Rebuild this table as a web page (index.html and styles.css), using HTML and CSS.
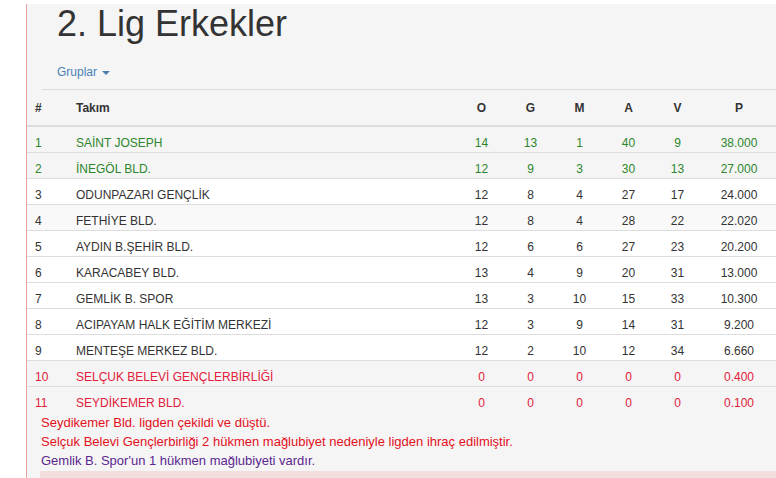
FILE: index.html
```html
<!DOCTYPE html>
<html lang="tr">
<head>
    <meta charset="UTF-8">
    <meta name="viewport" content="width=device-width, initial-scale=1.0">
    <title>2. Lig Erkekler</title>
    <link rel="stylesheet" href="styles.css">
</head>
<body>
    <div class="page">
        <h1 class="title">2. Lig Erkekler</h1>

        <div class="groups">
            <a href="#" class="groups-toggle">Gruplar <span class="caret"></span></a>
        </div>

        <table class="standings">
            <colgroup>
                <col class="col-rank">
                <col class="col-team">
                <col class="col-num">
                <col class="col-num">
                <col class="col-num">
                <col class="col-num">
                <col class="col-num">
                <col class="col-pts">
            </colgroup>
            <thead>
                <tr>
                    <th>#</th>
                    <th>Takım</th>
                    <th class="num">O</th>
                    <th class="num">G</th>
                    <th class="num">M</th>
                    <th class="num">A</th>
                    <th class="num">V</th>
                    <th class="num">P</th>
                </tr>
            </thead>
            <tbody>
                <tr class="up">
                    <td>1</td><td>SAİNT JOSEPH</td>
                    <td class="num">14</td><td class="num">13</td><td class="num">1</td><td class="num">40</td><td class="num">9</td><td class="num">38.000</td>
                </tr>
                <tr class="up">
                    <td>2</td><td>İNEGÖL BLD.</td>
                    <td class="num">12</td><td class="num">9</td><td class="num">3</td><td class="num">30</td><td class="num">13</td><td class="num">27.000</td>
                </tr>
                <tr class="plain">
                    <td>3</td><td>ODUNPAZARI GENÇLİK</td>
                    <td class="num">12</td><td class="num">8</td><td class="num">4</td><td class="num">27</td><td class="num">17</td><td class="num">24.000</td>
                </tr>
                <tr class="plain alt">
                    <td>4</td><td>FETHİYE BLD.</td>
                    <td class="num">12</td><td class="num">8</td><td class="num">4</td><td class="num">28</td><td class="num">22</td><td class="num">22.020</td>
                </tr>
                <tr class="plain">
                    <td>5</td><td>AYDIN B.ŞEHİR BLD.</td>
                    <td class="num">12</td><td class="num">6</td><td class="num">6</td><td class="num">27</td><td class="num">23</td><td class="num">20.200</td>
                </tr>
                <tr class="plain">
                    <td>6</td><td>KARACABEY BLD.</td>
                    <td class="num">13</td><td class="num">4</td><td class="num">9</td><td class="num">20</td><td class="num">31</td><td class="num">13.000</td>
                </tr>
                <tr class="plain">
                    <td>7</td><td>GEMLİK B. SPOR</td>
                    <td class="num">13</td><td class="num">3</td><td class="num">10</td><td class="num">15</td><td class="num">33</td><td class="num">10.300</td>
                </tr>
                <tr class="plain">
                    <td>8</td><td>ACIPAYAM HALK EĞİTİM MERKEZİ</td>
                    <td class="num">12</td><td class="num">3</td><td class="num">9</td><td class="num">14</td><td class="num">31</td><td class="num">9.200</td>
                </tr>
                <tr class="plain">
                    <td>9</td><td>MENTEŞE MERKEZ BLD.</td>
                    <td class="num">12</td><td class="num">2</td><td class="num">10</td><td class="num">12</td><td class="num">34</td><td class="num">6.660</td>
                </tr>
                <tr class="down">
                    <td>10</td><td>SELÇUK BELEVİ GENÇLERBİRLİĞİ</td>
                    <td class="num">0</td><td class="num">0</td><td class="num">0</td><td class="num">0</td><td class="num">0</td><td class="num">0.400</td>
                </tr>
                <tr class="down">
                    <td>11</td><td>SEYDİKEMER BLD.</td>
                    <td class="num">0</td><td class="num">0</td><td class="num">0</td><td class="num">0</td><td class="num">0</td><td class="num">0.100</td>
                </tr>
            </tbody>
        </table>

        <div class="notes">
            <p class="note-red">Seydikemer Bld. ligden çekildi ve düştü.</p>
            <p class="note-red">Selçuk Belevi Gençlerbirliği 2 hükmen mağlubiyet nedeniyle ligden ihraç edilmiştir.</p>
            <p class="note-purple">Gemlik B. Spor'un 1 hükmen mağlubiyeti vardır.</p>
        </div>

        <div class="alert"></div>
    </div>
</body>
</html>
```

FILE: styles.css
```css
body {
    margin: 0;
    padding: 0;
    background-color: #ffffff;
    font-family: 'Liberation Sans', Arial, sans-serif;
    color: #333333;
    overflow: hidden;
}

.page {
    margin-left: 26px;
    border-left: 1px solid #e6a3a3; /* pinkish rule */
    background-color: #f5f5f5;
    min-height: 478px;
}

.title {
    margin: 4px 0 0 30px;
    font-size: 36px;
    font-weight: 400;
    line-height: 40px;
    color: #333333;
}

.groups {
    margin: 19px 0 0 15px;
    padding: 0 0 9px 15px;
    border-bottom: 1px solid #dddddd;
    line-height: 16px;
}

.groups-toggle {
    font-size: 12px;
    color: #4a7fb5;
    text-decoration: none;
}

.caret {
    display: inline-block;
    width: 0;
    height: 0;
    margin-left: 2px;
    vertical-align: middle;
    border-top: 4px solid #4a7fb5;
    border-left: 4px solid transparent;
    border-right: 4px solid transparent;
}

.standings {
    width: 749px;
    table-layout: fixed;
    border-collapse: collapse;
    font-size: 12px;
}

.col-rank { width: 41px; }
.col-team { width: 389px; }
.col-num { width: 49px; }
.col-pts { width: 74px; }

.standings th {
    padding: 10px 8px 8px;
    line-height: 17px;
    text-align: left;
    font-weight: 700;
    color: #333333;
    border-bottom: 2px solid #dddddd;
}

.standings td {
    padding: 8px 8px 0;
    line-height: 17px;
    border-top: 1px solid #dddddd;
    white-space: nowrap;
}

.standings thead + tbody tr:first-child td {
    border-top: none;
}

.standings .num {
    text-align: center;
}

.standings th.num,
.standings td.num {
    padding-left: 0;
    padding-right: 0;
}

.up td {
    color: #2d862d;
}

.plain td {
    background-color: #ffffff;
}

.plain.alt td {
    background-color: #f9f9f9;
}

.down td {
    color: #e2203a;
}

.notes {
    padding: 1px 0 0 14px;
}

.notes p {
    margin: 0;
    font-size: 13px;
    line-height: 19px;
}

.note-red {
    color: #e3101c;
}

.note-purple {
    margin-top: 5px;
    color: #5b2690;
}

.alert {
    margin: 1px 0 0 13px;
    height: 20px;
    background-color: #f2dede;
}
```
